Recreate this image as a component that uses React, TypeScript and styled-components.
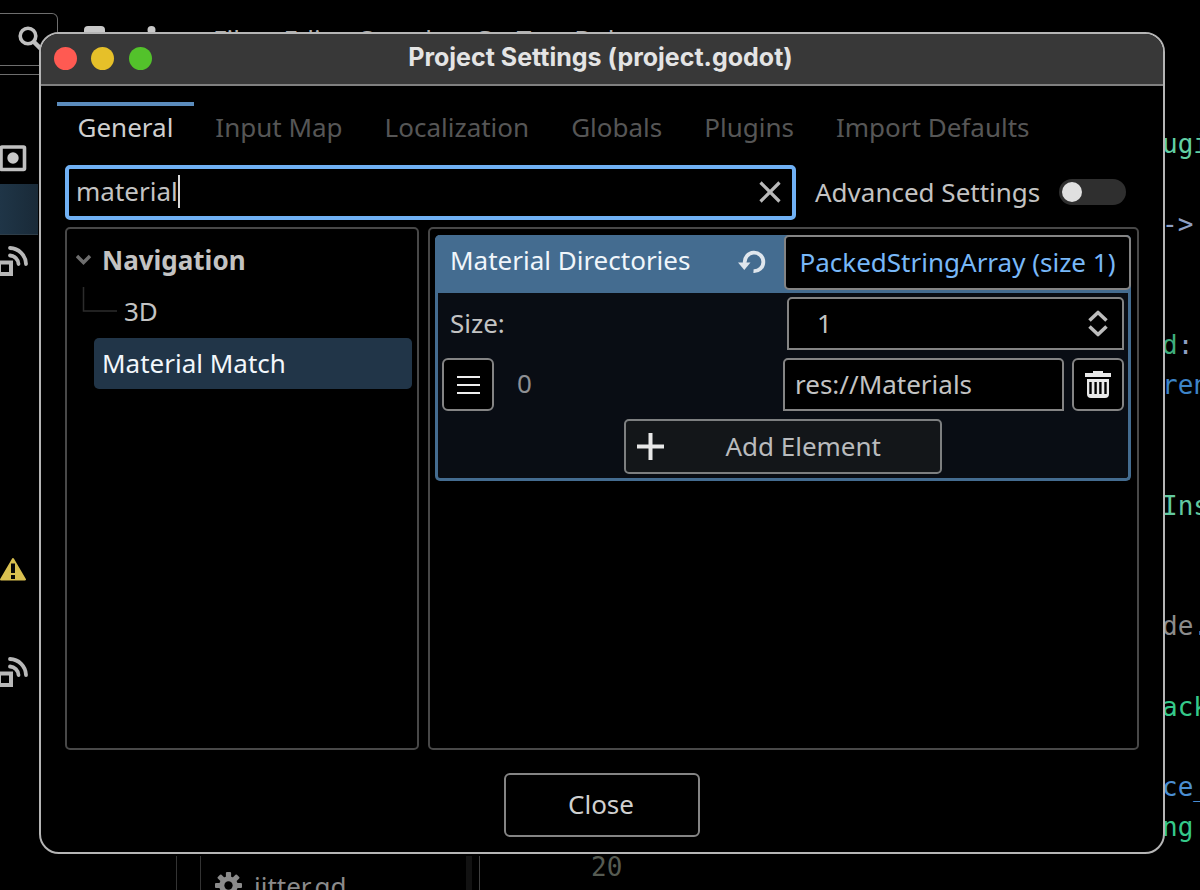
import React from "react";
import styled, { createGlobalStyle } from "styled-components";

const Global = createGlobalStyle`
  * { box-sizing: border-box; }
  body { margin: 0; background: #000; }
`;

const Screen = styled.div`
  position: relative;
  width: 1200px;
  height: 890px;
  overflow: hidden;
  background: #000;
  color: #c3c3c3;
  font: 26px/36px "Noto Sans", sans-serif;
  white-space: nowrap;
`;

/* ---------- editor behind the dialog ---------- */

const Editor = styled.div`
  display: grid;
  grid-template-columns: 58px 119px 303px 680px 40px;
  grid-template-rows: 856px 34px;
  width: 1200px;
  height: 890px;
`;

const SceneDock = styled.div`
  display: flex;
  flex-direction: column;
  height: 856px;
`;

const FilterBox = styled.div`
  margin-top: 13px;
  height: 53px;
  border: 1.5px solid #6e6e6e;
  border-left: 0;
  border-radius: 0 6px 0 0;
  padding: 11px 0 0 17px;
`;

const DockRule = styled.div`
  height: 0;
  margin-top: 8px;
  border-top: 1.5px solid #6e6e6e;
`;

const DockIcons = styled.div`
  display: flex;
  flex-direction: column;
  padding-top: 70px;
  svg { display: block; }
`;

const DockSelection = styled.div`
  width: 38px;
  height: 51px;
  margin: 12px 0 10px;
  background: linear-gradient(90deg, #1f3547, #192a38);
  border-bottom: 1px solid #2e3d48;
`;

const Spacer = styled.div<{ $h: number }>`
  height: ${(p) => p.$h}px;
`;

const MenuStrip = styled.div`
  grid-column: 2 / 5;
  display: flex;
  height: 60px;
  padding: 21px 0 0 25px;
  svg { flex: none; margin-top: -3px; }
`;

const MenuLabels = styled.div`
  display: flex;
  margin-left: 52px;
  gap: 29px;
  color: #b0b0b0;
  span:nth-child(4) { margin-left: 3px; word-spacing: 2px; }
`;

const CodeLane = styled.div`
  padding: 124px 0 0 2px;
  font: 26px/40.2px "DejaVu Sans Mono", monospace;
`;

const CodeLine = styled.div<{ $c?: string }>`
  height: 40.2px;
  color: ${(p) => p.$c || "#aaa"};
`;

const Punctuation = styled.span`
  color: #8e9fc4;
`;

const DockEdge = styled.div`
  grid-column: 1 / 3;
  border-right: 1.5px solid #333;
`;

const FileDock = styled.div`
  display: flex;
  margin-left: 23px;
  padding: 11px 0 0 14px;
  border-left: 1.5px solid #333;
  border-right: 1.5px solid #404040;
  background: linear-gradient(90deg, transparent 265px, #121212 265px, #121212 271px, transparent 271px);
  color: #8b8b8b;
  gap: 12px;
  height: 34px;
  overflow: hidden;
  svg { flex: none; margin-top: 5px; }
`;

const FileName = styled.span`
  margin-top: 1px;
`;

const Gutter = styled.div`
  padding: 0 0 0 111px;
  font: 26px/22px "DejaVu Sans Mono", monospace;
  color: #565b52;
`;

/* ---------- dialog ---------- */

const Dialog = styled.section`
  position: absolute;
  left: 39px;
  top: 32px;
  width: 1126px;
  height: 822px;
  border: 2px solid #b5b5b5;
  border-radius: 20px;
  background: #000;
  overflow: hidden;
  display: flex;
  flex-direction: column;
`;

const TitleBar = styled.header`
  display: grid;
  grid-template-columns: 240px 1fr 243px;
  align-items: center;
  height: 52px;
  flex: none;
  background: #383838;
  border-bottom: 2px solid #808080;
`;

const Lights = styled.div`
  display: flex;
  gap: 14.3px;
  padding: 0 0 2px 13px;
`;

const Light = styled.span<{ $c: string }>`
  width: 23px;
  height: 23px;
  border-radius: 50%;
  background: ${(p) => p.$c};
`;

const Title = styled.h1`
  margin: 0;
  padding-bottom: 4px;
  text-align: center;
  color: #e4e4e4;
  font: 700 25px/30px Inter, sans-serif;
`;

const Tabs = styled.nav`
  display: flex;
  gap: 1px;
  height: 63px;
  margin: 16px 0 0 16px;
  flex: none;
`;

const Tab = styled.div<{ $active?: boolean }>`
  padding: 4px 20.5px 0;
  height: 57px;
  line-height: 35px;
  border-top: 4px solid ${(p) => (p.$active ? "#5b8cbd" : "transparent")};
  color: ${(p) => (p.$active ? "#cfcfcf" : "#565656")};
`;

const SearchRow = styled.div`
  display: flex;
  align-items: center;
  height: 55px;
  margin-left: 24px;
  flex: none;
`;

const SearchField = styled.div`
  display: flex;
  align-items: center;
  width: 731px;
  height: 55px;
  padding: 0 11px 3px 7px;
  border: 4px solid #70b1f5;
  border-radius: 5px;
  svg { margin: 1px 0 0 auto; }
`;

const Caret = styled.span`
  width: 2px;
  height: 33px;
  background: #d8d8d8;
`;

const AdvancedLabel = styled.span`
  margin: 0 0 2px 19px;
  width: 244px;
`;

const Toggle = styled.span`
  width: 67px;
  height: 26px;
  margin-bottom: 2px;
  padding: 3px;
  border-radius: 13px;
  background: #2f2f2f;
  &::before {
    content: "";
    display: block;
    width: 20px;
    height: 20px;
    border-radius: 50%;
    background: #e0e0e0;
  }
`;

const Panels = styled.div`
  display: flex;
  gap: 9px;
  height: 524px;
  margin: 7px 0 0 24px;
  flex: none;
`;

const Panel = styled.div<{ $w: number }>`
  width: ${(p) => p.$w}px;
  height: 523px;
  padding: 6px;
  border: 2px solid #484848;
  border-radius: 5px;
`;

const TreeRow = styled.div<{ $pad: number; $bold?: boolean }>`
  display: flex;
  align-items: center;
  height: 51px;
  padding: 0 0 1px ${(p) => p.$pad}px;
  font-weight: ${(p) => (p.$bold ? 700 : 400)};
`;

const TreeSelected = styled.div`
  display: flex;
  align-items: center;
  width: 318px;
  height: 51px;
  margin: 1px 0 0 21px;
  padding: 0 0 1px 8px;
  border-radius: 5px;
  background: #213548;
  color: #f2f7fb;
`;

const PropertyGroup = styled.div`
  width: 696px;
  height: 246px;
  margin-left: -1px;
  border: 3px solid #446c90;
  border-top: 0;
  border-radius: 5px;
  background: #090d14;
`;

const PropertyHead = styled.div`
  display: flex;
  height: 58px;
  margin: 0 -3px;
  padding-left: 15px;
  border-radius: 5px 5px 0 0;
  background: #446c90;
  color: #f0f6fb;
  svg { margin: 15px 18px 0 auto; }
`;

const PropertyName = styled.span`
  line-height: 51px;
`;

const ArrayButton = styled.div`
  width: 347px;
  height: 55px;
  border: 2px solid #848484;
  border-radius: 5px;
  background: #000;
  color: #78b8f8;
  text-align: center;
  line-height: 51px;
`;

const SizeRow = styled.div`
  display: flex;
  justify-content: space-between;
  height: 53px;
  margin-top: 4px;
  padding: 0 4px 0 12px;
  line-height: 53px;
`;

const Field = styled.div<{ $w: number; $pad: number }>`
  display: flex;
  align-items: center;
  width: ${(p) => p.$w}px;
  height: 53px;
  padding: 0 14px 2px ${(p) => p.$pad}px;
  border: 2px solid #848484;
  border-radius: 5px 5px 0 0;
  background: #000;
  line-height: 46px;
  svg { margin: 1px 0 0 auto; }
`;

const ItemRow = styled.div`
  display: flex;
  margin-top: 8px;
  padding: 0 4px;
`;

const SquareButton = styled.div`
  display: flex;
  align-items: center;
  justify-content: center;
  width: 52px;
  height: 53px;
  border: 2px solid #848484;
  border-radius: 6px;
  background: #000;
`;

const ItemIndex = styled.span`
  flex: 1;
  padding-left: 23px;
  line-height: 51px;
  color: #8e9094;
`;

const FieldGap = styled.span`
  width: 8px;
`;

const AddButton = styled.div`
  display: flex;
  align-items: center;
  width: 318px;
  height: 55px;
  margin: 8px auto 0;
  padding: 0 59px 1px 11px;
  border: 2px solid #7d7f80;
  border-radius: 5px;
  background: #131619;
  justify-content: space-between;
  color: #b9bbbd;
`;

const CloseButton = styled.div`
  width: 196px;
  height: 64px;
  margin: 22px 0 0 463px;
  border: 2px solid #848484;
  border-radius: 6px;
  color: #d0d0d0;
  text-align: center;
  line-height: 59px;
  padding-right: 2px;
`;

const SignalIcon = () => (
  <svg width="30" height="32" viewBox="0 0 30 32" fill="none" stroke="#b8b8b8">
    <rect x="-1" y="17.5" width="12" height="11.5" strokeWidth="4" />
    <path d="M10 3A16.5 16.5 0 0 1 26 19M10 10.5A9 9 0 0 1 18.5 19" strokeWidth="3.8" strokeLinecap="round" />
  </svg>
);

const code: Array<[string, string?]> = [
  ["ugi", "#62d0a4"], [""], ["->", "#8e9fc4"], [""], [""], ["d:", "#3fae7c"], ["ren", "#3d84c8"],
  [""], [""], ["Ins", "#62c9a0"], [""], [""], ["de.", "#8c8c8c"], [""], ["ack", "#35c98a"], [""],
  ["ce_", "#4b8ed2"], ["ng", "#35c98a"],
];

export default function App() {
  return (
    <Screen>
      <Global />
      <Editor>
        <SceneDock>
          <FilterBox>
            <svg width="26" height="28" viewBox="0 0 26 28" fill="none" stroke="#c0c0c0">
              <circle cx="11" cy="11" r="7.8" strokeWidth="3.6" />
              <path d="M16.5 16.5L25 25" strokeWidth="4.5" />
            </svg>
          </FilterBox>
          <DockRule />
          <DockIcons>
            <svg width="27" height="27" viewBox="0 0 27 27">
              <rect x="1" y="2" width="23.5" height="22.5" rx="1" fill="none" stroke="#c0c0c0" strokeWidth="3.6" />
              <circle cx="13" cy="13" r="5.7" fill="#c8c8c8" />
            </svg>
            <DockSelection />
            <SignalIcon />
            <Spacer $h={280} />
            <svg width="27" height="25" viewBox="0 0 27 25">
              <path d="M13 2L25 22.5H1Z" fill="#d9c050" stroke="#d9c050" strokeWidth="2" strokeLinejoin="round" />
              <path d="M13 6.5V16M13 18V22" stroke="#080808" strokeWidth="4" />
            </svg>
            <Spacer $h={74} />
            <SignalIcon />
          </DockIcons>
        </SceneDock>
        <MenuStrip>
          <svg width="78" height="24" viewBox="0 0 78 24" fill="#c8c8c8">
            <rect x="1" y="8" width="21" height="16" rx="4" />
            <circle cx="68.5" cy="12" r="4" />
          </svg>
          <MenuLabels>
            <span>File</span><span>Edit</span><span>Search</span><span>Go To</span><span>Debug</span>
          </MenuLabels>
        </MenuStrip>
        <CodeLane>
          {code.map(([text, color], i) => (
            <CodeLine key={i} $c={color}>
              {text === "de." ? <>de<Punctuation>.</Punctuation></> : text === "d:" ? <>d<Punctuation>:</Punctuation></> : text}
            </CodeLine>
          ))}
        </CodeLane>
        <DockEdge />
        <FileDock>
          <svg width="27" height="27" viewBox="0 0 26 26">
            <g fill="#8b8b8b">
              {[0, 45, 90, 135].map((a) => (
                <rect key={a} x="10.5" y="0" width="5" height="26" rx="1" transform={`rotate(${a} 13 13)`} />
              ))}
              <circle cx="13" cy="13" r="9" />
            </g>
            <circle cx="13" cy="13" r="4" fill="#000" />
          </svg>
          <FileName>jitter.gd</FileName>
        </FileDock>
        <Gutter>20</Gutter>
      </Editor>

      <Dialog>
        <TitleBar>
          <Lights>
            <Light $c="#ff5a52" />
            <Light $c="#e6c029" />
            <Light $c="#53c22b" />
          </Lights>
          <Title>Project Settings (project.godot)</Title>
        </TitleBar>
        <Tabs>
          <Tab $active>General</Tab>
          <Tab>Input Map</Tab>
          <Tab>Localization</Tab>
          <Tab>Globals</Tab>
          <Tab>Plugins</Tab>
          <Tab>Import Defaults</Tab>
        </Tabs>
        <SearchRow>
          <SearchField>
            material
            <Caret />
            <svg width="22" height="22" viewBox="0 0 22 22" stroke="#b9b9b9" strokeWidth="3.2">
              <path d="M1.5 1.5L20.5 20.5M20.5 1.5L1.5 20.5" />
            </svg>
          </SearchField>
          <AdvancedLabel>Advanced Settings</AdvancedLabel>
          <Toggle />
        </SearchRow>
        <Panels>
          <Panel $w={354}>
            <TreeRow $pad={3} $bold>
              <svg width="26" height="12" viewBox="0 0 26 12" fill="none" stroke="#6e6e6e" strokeWidth="3.4">
                <path d="M1 2L7.5 8.5L14 2" />
              </svg>
              Navigation
            </TreeRow>
            <TreeRow $pad={9}>
              <svg width="42" height="51" viewBox="0 0 42 51" fill="none" stroke="#2c2c2c" strokeWidth="1.5">
                <path d="M1.5 1V25H35" />
              </svg>
              3D
            </TreeRow>
            <TreeSelected>Material Match</TreeSelected>
          </Panel>
          <Panel $w={711}>
            <PropertyGroup>
              <PropertyHead>
                <PropertyName>Material Directories</PropertyName>
                <svg width="28" height="25" viewBox="0 0 28 25">
                  <path d="M6.8 13A9.3 9.3 0 1 1 15.5 21.2" fill="none" stroke="#dfe6ed" strokeWidth="3.8" />
                  <path d="M0 12.5H12.5L6.3 20Z" fill="#dfe6ed" />
                </svg>
                <ArrayButton>PackedStringArray (size 1)</ArrayButton>
              </PropertyHead>
              <SizeRow>
                <span>Size:</span>
                <Field $w={337} $pad={28}>
                  1
                  <svg width="20" height="27" viewBox="0 0 20 27" fill="none" stroke="#bdbdbd" strokeWidth="3.6" strokeLinejoin="round">
                    <path d="M1.5 10.5L10 2.5L18.5 10.5M1.5 16.5L10 24.5L18.5 16.5" />
                  </svg>
                </Field>
              </SizeRow>
              <ItemRow>
                <SquareButton>
                  <svg width="23" height="20" viewBox="0 0 23 20" stroke="#efefef" strokeWidth="2">
                    <path d="M0 2H23M0 10H23M0 18H23" />
                  </svg>
                </SquareButton>
                <ItemIndex>0</ItemIndex>
                <Field $w={281} $pad={10}>res://Materials</Field>
                <FieldGap />
                <SquareButton>
                  <svg width="26" height="27" viewBox="0 0 26 27">
                    <path d="M8 0H18V2H26V6H0V2H8ZM2 8H24V23Q24 27 20 27H6Q2 27 2 23Z" fill="#e8e8e8" />
                    <path d="M5.5 11V23M10.6 11V23M15.4 11V23M20.5 11V23" stroke="#000" strokeWidth="2.4" />
                  </svg>
                </SquareButton>
              </ItemRow>
              <AddButton>
                <svg width="27" height="27" viewBox="0 0 27 27" stroke="#e8e8e8" strokeWidth="4">
                  <path d="M13.5 0V27M0 13.5H27" />
                </svg>
                Add Element
              </AddButton>
            </PropertyGroup>
          </Panel>
        </Panels>
        <CloseButton>Close</CloseButton>
      </Dialog>
    </Screen>
  );
}
